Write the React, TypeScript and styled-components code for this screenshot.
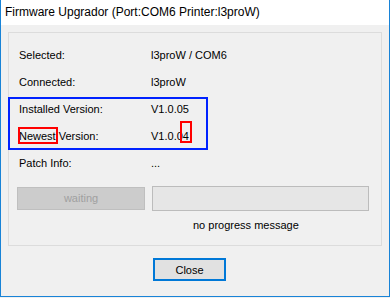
import React from 'react'
import styled, { createGlobalStyle } from 'styled-components'

const GlobalStyle = createGlobalStyle`
  html, body {
    margin: 0;
    padding: 0;
    background: #f0f0f0;
  }
  body {
    font-family: "Liberation Sans", Arial, sans-serif;
    font-size: 11px;
    color: #000;
  }
`

const Window = styled.div`
  box-sizing: border-box;
  width: 390px;
  height: 297px;
  display: flex;
  flex-direction: column;
  border: 1px solid #1883d7;
  border-top: none;
  background: #f0f0f0;
`

const TitleBar = styled.div`
  height: 25px;
  line-height: 25px;
  padding-left: 4px;
  font-size: 12px;
  background: #fff;
  white-space: nowrap;
`

const Body = styled.div`
  flex: 1;
  padding: 7px 7px 0 7px;
`

const GroupBox = styled.div`
  box-sizing: border-box;
  height: 214px;
  border: 1px solid #dcdcdc;
  padding-top: 9px;
`

const Row = styled.div`
  display: grid;
  grid-template-columns: 132px 1fr;
  height: 27px;
  line-height: 27px;
  padding-left: 10px;
  white-space: nowrap;
`

const Highlight = styled.div`
  position: relative;
`

const BlueFrame = styled.div`
  position: absolute;
  left: -1px;
  top: 1px;
  width: 200px;
  height: 53px;
  box-sizing: border-box;
  border: 2px solid #0022ff;
  pointer-events: none;
`

const Mark = styled.span<{ $l: number; $r: number; $t: number; $b: number }>`
  position: relative;
  &::after {
    content: '';
    position: absolute;
    left: ${(p) => p.$l}px;
    right: ${(p) => p.$r}px;
    top: ${(p) => p.$t}px;
    bottom: ${(p) => p.$b}px;
    border: 2px solid #ff0000;
  }
`

const ActionRow = styled.div`
  display: flex;
  align-items: center;
  gap: 7px;
  margin: 9px 0 0 8px;
`

const WaitButton = styled.div`
  box-sizing: border-box;
  width: 128px;
  height: 23px;
  line-height: 21px;
  text-align: center;
  background: #cccccc;
  border: 1px solid #bfbfbf;
  color: #a0a0a0;
`

const Progress = styled.div`
  box-sizing: border-box;
  width: 217px;
  height: 25px;
  background: #e6e6e6;
  border: 1px solid #bcbcbc;
`

const Message = styled.div`
  margin: 5px 0 0 184px;
  line-height: 18px;
`

const Footer = styled.div`
  display: flex;
  padding: 12px 0 0 145px;
`

const CloseButton = styled.button`
  box-sizing: border-box;
  width: 73px;
  height: 23px;
  padding: 0;
  font: inherit;
  color: #000;
  background: #e1e1e1;
  border: 2px solid #0078d7;
`

export default function App() {
  return (
    <>
      <GlobalStyle />
      <Window>
        <TitleBar>Firmware Upgrador (Port:COM6 Printer:l3proW)</TitleBar>
        <Body>
          <GroupBox>
            <Row>
              <span>Selected:</span>
              <span>l3proW / COM6</span>
            </Row>
            <Row>
              <span>Connected:</span>
              <span>l3proW</span>
            </Row>
            <Highlight>
              <Row>
                <span>Installed Version:</span>
                <span>V1.0.05</span>
              </Row>
              <Row>
                <span>
                  <Mark $l={-1} $r={-2} $t={-3} $b={-2}>Newest</Mark> Version:
                </span>
                <span>
                  V1.0.0<Mark $l={-3} $r={-3} $t={-9} $b={-1}>4</Mark>
                </span>
              </Row>
              <BlueFrame />
            </Highlight>
            <Row>
              <span>Patch Info:</span>
              <span>...</span>
            </Row>
            <ActionRow>
              <WaitButton>waiting</WaitButton>
              <Progress />
            </ActionRow>
            <Message>no progress message</Message>
          </GroupBox>
          <Footer>
            <CloseButton>Close</CloseButton>
          </Footer>
        </Body>
      </Window>
    </>
  )
}
